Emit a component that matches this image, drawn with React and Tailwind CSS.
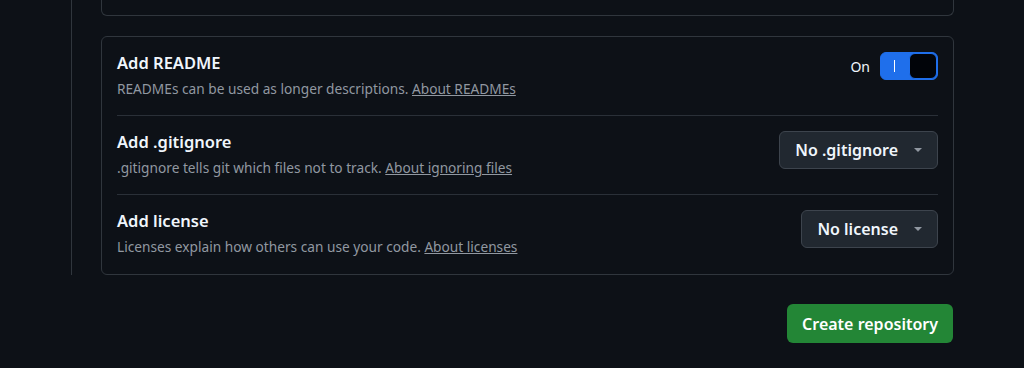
// New repository form — bottom "initialize" options + submit.

const FONT = { fontFamily: '"Noto Sans", "Liberation Sans", sans-serif' };

function Caret() {
  return (
    <svg width="8" height="4" viewBox="0 0 8 4" className="fill-[#9198a1]">
      <path d="M0 0h8L4 4z" />
    </svg>
  );
}

function SelectButton({ label }) {
  return (
    <button className="flex items-center gap-4 h-[38px] px-[15px] rounded-md bg-[#212830] border border-[#3d444d] text-[16px] font-semibold text-[#f0f6fc]">
      <span>{label}</span>
      <Caret />
    </button>
  );
}

function Toggle() {
  return (
    <div className="flex items-center gap-2.5">
      <span className="text-[14px] text-[#f0f6fc]">On</span>
      <div className="flex w-[58px] h-[28px] rounded-md bg-[#1f6feb] border border-[#1f6feb]">
        <div className="flex-1 flex items-center justify-center pr-px">
          <span className="w-px h-[12px] bg-white" />
        </div>
        <div className="w-[28px] h-full rounded-md bg-[#010409] border border-[#1f6feb]" />
      </div>
    </div>
  );
}

function Row({ title, desc, link, control, last }) {
  return (
    <div className={`flex items-start justify-between pt-[14px] mx-[15px] ${last ? 'pb-[17px]' : 'pb-[16px] border-b border-[#2a3038]'}`}>
      <div>
        <p className="text-[16.5px] leading-6 font-semibold text-[#f0f6fc]">{title}</p>
        <p className="mt-1 text-[13.7px] leading-5 text-[#9198a1]">
          {desc} <a className="underline text-[#9198a1]">{link}</a>
        </p>
      </div>
      <div className="mt-px">{control}</div>
    </div>
  );
}

export default function App() {
  return (
    <div className="w-[1024px] h-[368px] bg-[#0d1117] overflow-hidden" style={FONT}>
      <div className="ml-[71px] pl-[29px] pr-[70px] border-l border-[#30363d]">
        {/* tail of the previous card */}
        <div className="h-[16px] border-x border-b border-[#30363d] rounded-b-md" />

        <div className="mt-[20px] border border-[#30363d] rounded-md">
          <Row
            title="Add README"
            desc="READMEs can be used as longer descriptions."
            link="About READMEs"
            control={<Toggle />}
          />
          <Row
            title="Add .gitignore"
            desc=".gitignore tells git which files not to track."
            link="About ignoring files"
            control={<SelectButton label="No .gitignore" />}
          />
          <Row
            title="Add license"
            desc="Licenses explain how others can use your code."
            link="About licenses"
            control={<SelectButton label="No license" />}
            last
          />
        </div>
      </div>

      <div className="flex justify-end pr-[71px] mt-[29px]">
        <button className="h-[39px] px-[15px] rounded-md bg-[#238636] text-[16px] font-semibold text-white">
          Create repository
        </button>
      </div>
    </div>
  );
}
